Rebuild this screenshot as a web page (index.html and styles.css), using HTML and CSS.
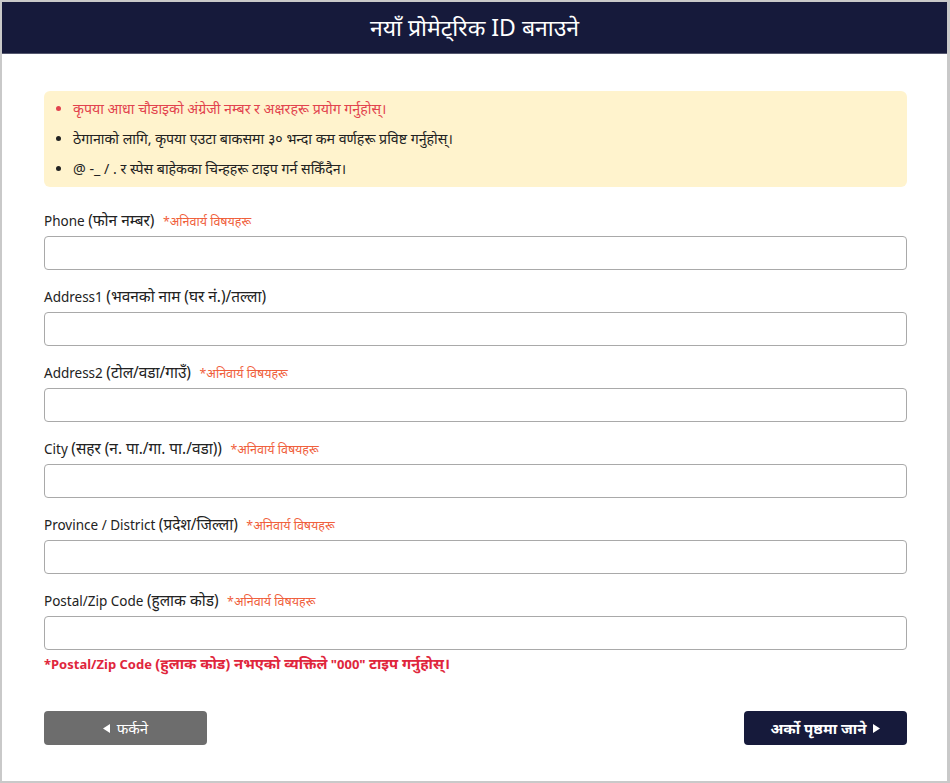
FILE: index.html
```html
<!DOCTYPE html>
<html lang="ne">
<head>
  <meta charset="UTF-8">
  <meta name="viewport" content="width=device-width, initial-scale=1.0">
  <title>नयाँ प्रोमेट्रिक ID बनाउने</title>
  <link rel="stylesheet" href="styles.css">
</head>
<body>
  <div class="page_wrap">
    <div class="page_head">नयाँ प्रोमेट्रिक ID बनाउने</div>
    <div class="page_body">
      <ul class="notice">
        <li class="warn">कृपया आधा चौडाइको अंग्रेजी नम्बर र अक्षरहरू प्रयोग गर्नुहोस्।</li>
        <li>ठेगानाको लागि, कृपया एउटा बाकसमा ३० भन्दा कम वर्णहरू प्रविष्ट गर्नुहोस्।</li>
        <li>@ -_ / . र स्पेस बाहेकका चिन्हहरू टाइप गर्न सकिँदैन।</li>
      </ul>

      <div class="field">
        <label>Phone <span class="np">(फोन नम्बर)</span> <span class="req">*अनिवार्य विषयहरू</span></label>
        <input type="text">
      </div>
      <div class="field">
        <label>Address1 <span class="np">(भवनको नाम (घर नं.)/तल्ला)</span></label>
        <input type="text">
      </div>
      <div class="field">
        <label>Address2 <span class="np">(टोल/वडा/गाउँ)</span> <span class="req">*अनिवार्य विषयहरू</span></label>
        <input type="text">
      </div>
      <div class="field">
        <label>City <span class="np">(सहर (न. पा./गा. पा./वडा))</span> <span class="req">*अनिवार्य विषयहरू</span></label>
        <input type="text">
      </div>
      <div class="field">
        <label>Province / District <span class="np">(प्रदेश/जिल्ला)</span> <span class="req">*अनिवार्य विषयहरू</span></label>
        <input type="text">
      </div>
      <div class="field">
        <label>Postal/Zip Code <span class="np">(हुलाक कोड)</span> <span class="req">*अनिवार्य विषयहरू</span></label>
        <input type="text">
      </div>
      <p class="zip_note">*Postal/Zip Code <span class="np">(हुलाक कोड) नभएको व्यक्तिले</span> "000" <span class="np">टाइप गर्नुहोस्।</span></p>

      <div class="ctrl_btns">
        <button class="btn btn_back">
          <svg width="7" height="9" viewBox="0 0 7 9"><path d="M7 0 L0 4.5 L7 9 Z" fill="#fff"/></svg>
          फर्कने
        </button>
        <button class="btn btn_next">
          अर्को पृष्ठमा जाने
          <svg width="7" height="9" viewBox="0 0 7 9"><path d="M0 0 L7 4.5 L0 9 Z" fill="#fff"/></svg>
        </button>
      </div>
    </div>
  </div>
</body>
</html>
```

FILE: styles.css
```css
* {
  box-sizing: border-box;
}
body {
  margin: 0;
  font-family: "Noto Sans", "Open Sans", sans-serif;
  color: #222;
}
.page_wrap {
  width: 950px;
  height: 783px;
  border: 2px solid #c9c9c9;
  border-right-width: 3px;
  background-color: #fff;
}
.page_head {
  height: 52px;
  background-color: #161a3b;
  border-bottom: 1px solid #55586f;
  color: #fff;
  font-size: 23px;
  line-height: 51px;
  text-align: center;
}
.page_body {
  padding: 37px 40px 0 42px;
}
.notice {
  margin: 0;
  padding: 3px 0 3px 29px;
  background-color: #fff3cd;
  border-radius: 6px;
  list-style: disc;
  font-size: 14.2px;
}
.notice li {
  height: 30px;
  line-height: 30px;
}
.notice li.warn {
  color: #e2434e;
}
.notice li::marker {
  color: #222;
}
.notice li.warn::marker {
  color: #e2434e;
}
.np {
  font-size: 1.14em;
}
.field {
  margin-top: 17px;
}
.notice + .field {
  margin-top: 24px;
}
.field label {
  display: block;
  height: 20px;
  font-size: 13.5px;
  line-height: 20px;
  margin-bottom: 5px;
  color: #222;
  white-space: nowrap;
}
.field .req {
  margin-left: 5px;
  font-size: 12.5px;
  color: #f0603c;
}
.field input {
  display: block;
  width: 100%;
  height: 34px;
  border: 1px solid #a9a9a9;
  border-radius: 4px;
  padding: 0 10px;
  font-size: 14px;
}
.zip_note {
  height: 20px;
  margin: 3px 0 0;
  font-size: 13px;
  line-height: 20px;
  font-weight: bold;
  color: #e0263c;
}
.ctrl_btns {
  display: flex;
  justify-content: space-between;
  margin-top: 38px;
}
.btn {
  width: 163px;
  height: 34px;
  border: none;
  border-radius: 4px;
  color: #fff;
  font-family: inherit;
  font-size: 15px;
  display: flex;
  align-items: center;
  justify-content: center;
  gap: 7px;
  cursor: pointer;
}
.btn_back {
  background-color: #6d6d6d;
}
.btn_next {
  background-color: #161a3b;
  font-weight: bold;
}
```
